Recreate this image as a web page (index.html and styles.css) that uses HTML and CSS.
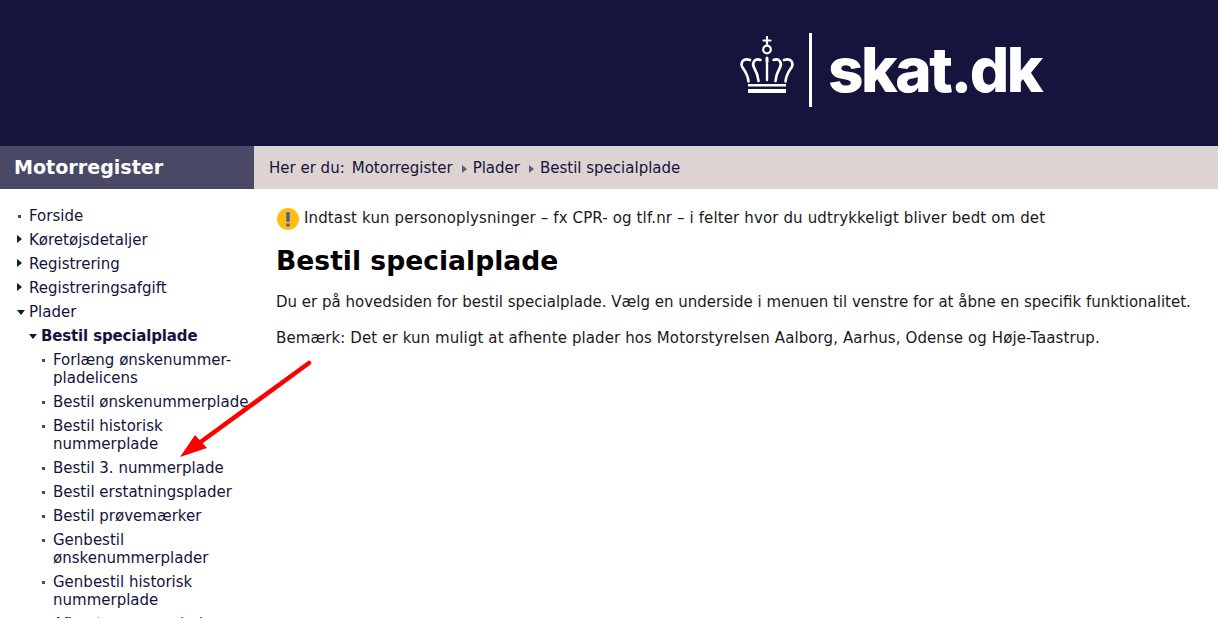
FILE: index.html
```html
<!DOCTYPE html>
<html lang="da">
<head>
<meta charset="utf-8">
<title>Bestil specialplade</title>
<link rel="stylesheet" href="styles.css">
</head>
<body>
<header class="masthead">
  <div class="brand">
    <svg class="crown" width="54" height="58" viewBox="0 0 54 58" aria-hidden="true">
      <g fill="none" stroke="#fff" stroke-linecap="round">
        <path d="M27 1V8M23.500 4.500H30.500" stroke-width="2.200"/>
        <circle cx="27" cy="13.500" r="3.800" stroke-width="2.200"/>
        <path d="M27 22V26" stroke-width="3"/>
        <path d="M27 28V44" stroke-width="2.400"/>
        <path d="M20.500 24C15 21.500 11.500 27 14 31.500C16 35 18 39 18.500 45" stroke-width="2.600"/>
        <path d="M33.500 24C39 21.500 42.500 27 40 31.500C38 35 36 39 35.500 45" stroke-width="2.600"/>
        <path d="M10 24C3 21.500 0 27 2.500 31.500C5 35 8 39 8.500 45.500" stroke-width="2.600"/>
        <path d="M44 24C51 21.500 54 27 51.500 31.500C49 35 46 39 45.500 45.500" stroke-width="2.600"/>
      </g>
      <rect x="8" y="48" width="38" height="2.500" fill="#fff"/>
      <rect x="8" y="53" width="38" height="4" fill="#fff"/>
    </svg>
    <span class="divider"></span>
    <span class="wordmark">skat.dk</span>
  </div>
</header>
<div class="topbar">
  <div class="section-title">Motorregister</div>
  <nav class="crumbs">
    <span>Her er du:</span><a>Motorregister</a>
    <span class="crumb-arrow"></span><a>Plader</a>
    <span class="crumb-arrow"></span><a>Bestil specialplade</a>
  </nav>
</div>
<div class="layout">
  <aside class="side">
    <ul class="menu">
      <li class="dot">Forside</li>
      <li class="closed">Køretøjsdetaljer</li>
      <li class="closed">Registrering</li>
      <li class="closed">Registreringsafgift</li>
      <li class="open">Plader</li>
    </ul>
    <ul class="menu sub">
      <li class="open strong">Bestil specialplade</li>
    </ul>
    <ul class="menu subsub">
      <li class="dot">Forlæng ønskenummer-<br>pladelicens</li>
      <li class="dot nowrap">Bestil ønskenummerplade</li>
      <li class="dot">Bestil historisk<br>nummerplade</li>
      <li class="dot">Bestil 3. nummerplade</li>
      <li class="dot">Bestil erstatningsplader</li>
      <li class="dot">Bestil prøvemærker</li>
      <li class="dot">Genbestil<br>ønskenummerplader</li>
      <li class="dot">Genbestil historisk<br>nummerplade</li>
      <li class="dot">Afhent nummerplade</li>
    </ul>
  </aside>
  <main class="content">
    <p class="notice">
      <svg class="warn" width="24" height="24" viewBox="0 0 24 24" aria-hidden="true">
        <circle cx="12" cy="12" r="11" fill="#fdc010"/>
        <rect x="10.200" y="5" width="3.600" height="10" rx="1.200" fill="#5a5aa8"/>
        <rect x="10.200" y="16.500" width="3.600" height="3" rx="1" fill="#5a5aa8"/>
      </svg>
      Indtast kun personoplysninger – fx CPR- og tlf.nr – i felter hvor du udtrykkeligt bliver bedt om det
    </p>
    <h1>Bestil specialplade</h1>
    <p class="para">Du er på hovedsiden for bestil specialplade. Vælg en underside i menuen til venstre for at åbne en specifik funktionalitet.</p>
    <p class="para wide">Bemærk: Det er kun muligt at afhente plader hos Motorstyrelsen Aalborg, Aarhus, Odense og Høje-Taastrup.</p>
  </main>
</div>
<svg class="annotation" width="140" height="110" viewBox="0 0 140 110" aria-hidden="true">
  <path d="M129 8L22 86" stroke="#fe0000" stroke-width="4.500" stroke-linecap="round" fill="none"/>
  <path d="M0 102L15 80L27 93Z" fill="#fe0000"/>
</svg>
</body>
</html>
```
FILE: styles.css
```css
* { box-sizing: border-box; }
html, body { margin: 0; height: 618px; overflow: hidden; }
body {
  position: relative;
  background: #fff;
  color: #14143c;
  font-family: "DejaVu Sans", Verdana, sans-serif;
  font-size: 15px;
  line-height: 18px;
}
.masthead {
  height: 146px;
  background: #14143c;
  display: flex;
  padding: 33px 0 0 740px;
}
.brand { display: flex; align-items: flex-start; }
.crown { display: block; margin-top: 3px; }
.divider { width: 3px; height: 74px; background: #fff; margin-left: 15px; }
.wordmark {
  margin-left: 16px;
  color: #fff;
  font-family: Inter, sans-serif;
  font-weight: 800;
  font-size: 62px;
  line-height: 74px;
  letter-spacing: -2.500px;
}
.topbar { display: flex; height: 43px; }
.section-title {
  width: 254px;
  background: #494966;
  color: #fff;
  font-weight: 700;
  font-size: 19.100px;
  line-height: 43px;
  padding-left: 14px;
}
.crumbs {
  flex: 1;
  background: #ddd3d3;
  display: flex;
  align-items: center;
  padding-left: 15px;
  white-space: pre;
}
.crumbs span:first-child { margin-right: 7px; }
.crumb-arrow {
  width: 0;
  height: 0;
  margin: 2px 6px 0 9px;
  border-left: 5px solid #5b5b73;
  border-top: 4px solid transparent;
  border-bottom: 4px solid transparent;
}
.layout { display: flex; }
.side { width: 254px; padding-top: 18px; flex: none; }
.menu { list-style: none; margin: 0; padding: 0 0 0 29px; }
.menu li { position: relative; margin-bottom: 6px; }
.sub { padding-left: 41px; }
.subsub { padding-left: 53px; }
.nowrap { white-space: nowrap; }
.strong { font-weight: 700; font-size: 15px; letter-spacing: -0.150px; }
.dot::before {
  content: "";
  position: absolute;
  left: -11px;
  top: 8px;
  width: 3px;
  height: 3px;
  background: #494966;
}
.closed::before {
  content: "";
  position: absolute;
  left: -12px;
  top: 4px;
  border-left: 5px solid #14143c;
  border-top: 4.500px solid transparent;
  border-bottom: 4.500px solid transparent;
}
.open::before {
  content: "";
  position: absolute;
  left: -12px;
  top: 7px;
  border-top: 5px solid #14143c;
  border-left: 4.500px solid transparent;
  border-right: 4.500px solid transparent;
}
.content { flex: 1; padding: 18px 0 0 22px; }
.notice {
  position: relative;
  margin: 0;
  padding-left: 28px;
  height: 22px;
  line-height: 22px;
  letter-spacing: 0.130px;
  color: #1a1a1a;
  white-space: nowrap;
}
.warn { position: absolute; left: 0; top: 0; }
h1 {
  margin: 16px 0 15px;
  font-size: 26.600px;
  line-height: 32px;
  font-weight: 700;
  color: #000;
}
.para { margin: 0 0 16px; line-height: 20px; color: #1a1a1a; white-space: nowrap; }
.wide { letter-spacing: 0.100px; }
.annotation { position: absolute; left: 180px; top: 355px; }
```
